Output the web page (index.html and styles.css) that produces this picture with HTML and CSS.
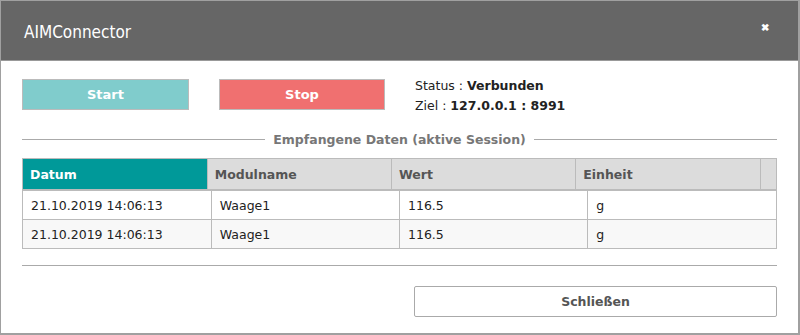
FILE: index.html
```html
<!DOCTYPE html>
<html lang="de">
<head>
  <meta charset="UTF-8">
  <meta name="viewport" content="width=device-width, initial-scale=1.0">
  <title>AIMConnector</title>
  <link rel="stylesheet" href="styles.css">
</head>
<body>
  <div class="dialog">
    <div class="header">
      <div class="header-title">AIMConnector</div>
      <button class="close-button" title="Schließen">&#x2716;</button>
    </div>

    <div class="content">
      <div class="controls">
        <button class="action-button start-button">Start</button>
        <button class="action-button stop-button">Stop</button>
        <div class="status">
          <div>Status : <b>Verbunden</b></div>
          <div>Ziel : <b>127.0.0.1 : 8991</b></div>
        </div>
      </div>

      <div class="legend">
        <span class="legend-line"></span>
        <span class="legend-text">Empfangene Daten (aktive Session)</span>
        <span class="legend-line"></span>
      </div>

      <div class="data-table">
        <table class="table-head">
          <colgroup>
            <col><col><col><col><col class="scroll-col">
          </colgroup>
          <tr>
            <th class="sorted">Datum</th>
            <th>Modulname</th>
            <th>Wert</th>
            <th>Einheit</th>
            <th></th>
          </tr>
        </table>
        <table class="table-body">
          <tr>
            <td>21.10.2019 14:06:13</td>
            <td>Waage1</td>
            <td>116.5</td>
            <td>g</td>
          </tr>
          <tr>
            <td>21.10.2019 14:06:13</td>
            <td>Waage1</td>
            <td>116.5</td>
            <td>g</td>
          </tr>
        </table>
      </div>

      <div class="divider"></div>

      <div class="footer">
        <button class="close-dialog">Schließen</button>
      </div>
    </div>
  </div>
</body>
</html>
```

FILE: styles.css
```css
body {
  margin: 0;
  padding: 0;
  font-family: "DejaVu Sans", Verdana, sans-serif;
  font-size: 12.5px;
  color: #222;
  background-color: #fff;
}

.dialog {
  width: 800px;
  height: 335px;
  box-sizing: border-box;
  border: 1px solid #a0a0a0;
  border-bottom-width: 2px;
  border-right-width: 2px;
  display: flex;
  flex-direction: column;
}

.header {
  height: 59px;
  background-color: #666;
  border-bottom: 1px solid #999;
  display: flex;
  justify-content: space-between;
  align-items: center;
  padding: 0 29px 0 23px;
  color: white;
}

.header-title {
  font-family: "DejaVu Sans Condensed", "DejaVu Sans", sans-serif;
  font-size: 17px;
  margin-top: 2px;
}

.close-button {
  background: transparent;
  border: none;
  color: white;
  font-size: 10px;
  font-weight: bold;
  padding: 0;
  margin-top: -6px;
  cursor: pointer;
}

.content {
  padding: 18px 21px 0 21px;
}

.controls {
  display: flex;
  align-items: flex-start;
  gap: 30px;
  height: 51px;
}

.action-button {
  height: 31px;
  border: 1px solid #bbb;
  color: white;
  font-family: inherit;
  font-size: 13px;
  font-weight: bold;
  cursor: pointer;
}

.start-button {
  width: 167px;
  background-color: #80cccc;
}

.stop-button {
  width: 166px;
  background-color: #f07070;
}

.status {
  line-height: 20px;
  margin-top: -3px;
}

.legend {
  display: flex;
  align-items: center;
  gap: 8px;
  height: 18px;
}

.legend-line {
  flex: 1;
  border-top: 1px solid #aaa;
}

.legend-text {
  font-weight: bold;
  color: #777;
}

.data-table {
  margin-top: 10px;
  border: 1px solid #bbb;
}

.data-table table {
  width: 100%;
  border-collapse: collapse;
  table-layout: fixed;
}

.scroll-col {
  width: 16px;
}

.table-head th {
  height: 30px;
  padding: 0 7px;
  text-align: left;
  background-color: #dcdcdc;
  color: #555;
  border-left: 1px solid #bbb;
  border-bottom: 2px solid #bbb;
}

.table-head th:first-child {
  border-left: none;
}

.table-head th.sorted {
  background-color: #009999;
  color: white;
}

.table-body td {
  height: 28px;
  padding: 0 8px;
  border-left: 1px solid #bbb;
  border-top: 1px solid #bbb;
}

.table-body tr:first-child td {
  border-top: none;
}

.table-body td:first-child {
  border-left: none;
}

.table-body tr:nth-child(even) td {
  background-color: #f8f8f8;
}

.divider {
  margin-top: 16px;
  border-top: 1px solid #aaa;
}

.footer {
  display: flex;
  justify-content: flex-end;
  margin-top: 20px;
}

.close-dialog {
  width: 363px;
  height: 31px;
  background-color: white;
  border: 1px solid #aaa;
  border-radius: 2px;
  font-family: inherit;
  font-size: 12.5px;
  font-weight: bold;
  color: #555;
  cursor: pointer;
}
```
